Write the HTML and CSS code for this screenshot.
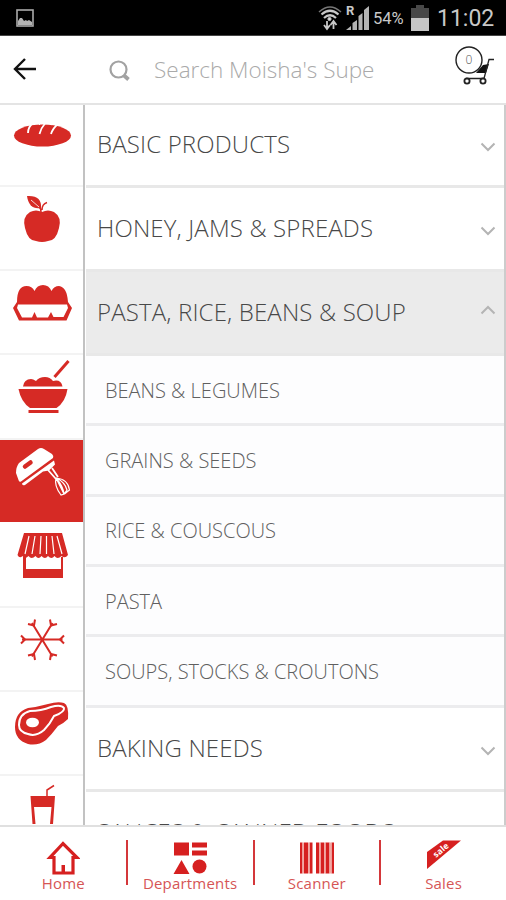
FILE: index.html
```html
<!DOCTYPE html>
<html lang="en">
<head>
<meta charset="utf-8">
<title>Departments</title>
<link rel="stylesheet" href="styles.css">
</head>
<body>
<div class="app">
  <div class="status">
    <svg class="st-pic" width="18" height="18" viewBox="0 0 18 18"><rect x="1" y="1" width="16" height="16" fill="none" stroke="#aaa" stroke-width="1.6"/><path d="M2 16v-4l2-3 2 0 2 3 2-1 1 1 2-1 3 2v3z" fill="#b4b4b4"/></svg>
    <svg class="st-wifi" width="24" height="26" viewBox="0 0 24 26" fill="none" stroke="#c8c8c8"><path d="M1 7Q12-3 23 7" stroke="#777" stroke-width="1.5"/><path d="M3.500 9.500Q12 2 20.500 9.500M6 13Q12 7.500 18 13" stroke-width="2.200"/><circle cx="11.500" cy="14" r="1.600" fill="#ddd"/><path d="M9 16v7M6 20l3 4 3-4M15.500 24v-7M12.500 20l3-4 3 4" stroke-width="1.800"/></svg>
    <div class="signal"><span class="roam">R</span><svg width="24" height="26" viewBox="0 0 24 26" fill="#b4b4b4"><path d="M0 25l5-4v4zM6.500 18l4.500-3v10H6.500zM12.500 11l4-3v17h-4zM18 5l5-4v24h-5z"/></svg></div>
    <span class="pct">54%</span>
    <svg class="st-bat" width="18" height="26" viewBox="0 0 18 26"><path d="M5 0h8v3h5v11H0V3h5z" fill="#484848"/><path d="M0 13h18v13H0z" fill="#c5c5c5"/></svg>
    <span class="clock">11:02</span>
  </div>
  <header class="header">
    <svg class="back" width="24" height="24" viewBox="0 0 24 24" fill="none" stroke="#111" stroke-width="2.400"><path d="M12 2L2 12l10 10M2 12h21"/></svg>
    <svg class="mag" width="22" height="22" viewBox="0 0 22 22" fill="none" stroke="#a2a2a2"><circle cx="9.500" cy="9.500" r="8" stroke-width="2.200"/><path d="M14.500 15l5 4.500" stroke-width="3.800"/></svg>
    <span class="ph">Search Moisha's Supe</span>
    <svg class="cart" width="40" height="40" viewBox="0 0 40 40"><path d="M21 27l7-8 6-1-3 9z" fill="#111"/><g fill="none" stroke="#222"><path d="M39 13.500h-5l-5 19H11" stroke-width="1.300"/><circle cx="14" cy="14" r="13" fill="#fff" stroke-width="1.400"/><circle cx="12" cy="35" r="2.600" stroke-width="1.800"/><circle cx="28" cy="35" r="2.600" stroke-width="1.800"/></g><text class="count" x="14" y="18" text-anchor="middle">0</text></svg>
  </header>
  <main class="main">
    <nav class="side">
      <div class="cell"><svg viewBox="0 0 84 84" width="84" height="84" fill="#d62a25"><ellipse cx="42.500" cy="31.500" rx="28.500" ry="11"/><path d="M28 29Q28 23 33 19M39.500 30Q41 24 45 19.500M51 30Q53 24 58 20" fill="none" stroke="#fff" stroke-width="1.800"/><path d="M27 22l5-5M39 21l4-4M51 21l5-4" stroke="#fff" stroke-width="1"/></svg></div>
      <div class="cell"><svg viewBox="0 0 84 84" width="84" height="84" fill="#d62a25"><path d="M42 25Q48 22 54 25Q62 30 59 41Q56 54 48 54Q42 56 36 54Q28 54 25 41Q22 30 30 25Q36 22 42 25z"/><path d="M27 9Q42 8 41 21Q29 23 27 9z"/><path d="M39 20Q41 21 41 25M42 23Q42 17 47 15.500" fill="none" stroke="#d62a25" stroke-width="1.500"/><path d="M31 13L39 20" stroke="#fff" stroke-width=".8"/></svg></div>
      <div class="cell"><svg viewBox="0 0 84 84" width="84" height="84"><path d="M17 31Q17 15 26.500 15Q32 15 34.500 20Q37 14 43 14Q49 14 51.500 20Q54 15 59 15Q67 16 68 31L72 37L66.500 49.500H19L13 37z" fill="#d62a25"/><path d="M18 33.500H67L68 37L63.500 46H53.500L51 41L48 46.500H37L34.500 41L32 46.500H22L17 37z" fill="#fff"/></svg></div>
      <div class="cell"><svg viewBox="0 0 84 84" width="84" height="84" fill="#d62a25"><path d="M23 31.500Q24 24 31 24Q33 24 36 26Q39 22 45 22Q50 22 53 26Q61 24 62.500 31.500z"/><path d="M18.500 34h49q-2 13-11 19H30q-9-6-11.500-19z"/><path d="M28.500 55h30v3h-30z"/><path d="M54.500 22L68.500 6" stroke="#d62a25" stroke-width="3"/></svg></div>
      <div class="cell active"><svg viewBox="0 0 84 84" width="84" height="84" fill="#fff"><path d="M19 23L38 9q3-2 6 0l8 5q2 2 1 4L21 41.500q-2 1-2.500-1.500L16 33q0-6 3-10z"/><path d="M22 43.500L54 20.500l1 4-6 6-6 1-18 13.500q-3 1-3-1.500z"/><path d="M25 26.500l5.500-4" stroke="#d62a25" stroke-width="4.500" stroke-linecap="round"/><path d="M48 30l8 9M52 28l6 9" stroke="#fff" stroke-width="1.800"/><path d="M56 38q-2 8 5 17l3-1q-1-8-8-16q9 4 11 12l-3 4M56 38l8 16M56 38q12 1 13.500 12l-5 4" fill="none" stroke="#fff" stroke-width="1.200"/></svg></div>
      <div class="cell"><svg viewBox="0 0 84 84" width="84" height="84" fill="#d62a25"><path d="M24 9h38l6 22q-3 4-6.500 1q-4 4-7 0q-3 4-6.500 0q-3 4-6.500 0q-3 4-6 0q-4 4-7 0q-4 4-6 0q-3 3-5-1z"/><path d="M29 12l-4 18M35 12l-3 18M41 12l-1 18M46.500 12v18M52 12l2 18M57 12l5 18" stroke="#fff" stroke-width="1.200"/><path d="M23 33h3v12h35V33h2v21H23z"/></svg></div>
      <div class="cell"><svg viewBox="0 0 84 84" width="84" height="84" fill="none" stroke="#d62a25" stroke-width="2"><path d="M22 31.500H62.500M32 15L52.500 48.500M52.500 15L32 48.500"/><path d="M64 27.500l-4 4 4 4M21 27.500l4 4-4 4M28 16l6 1.500 1-6M57 16l-6 1.500-1-6M28 47.500l6-1.500 1 6M57 47.500l-6-1.500-1 6"/></svg></div>
      <div class="cell"><svg viewBox="0 0 84 84" width="84" height="84" fill="#d62a25"><path d="M15 35Q15 20 28 16Q37 15 48 12Q58 9 64 11Q69 13 68 27Q64 31 58 34Q52 42 46 48Q38 54 28 52Q15 48 15 35z"/><path d="M19 33Q19 22 30 19Q41 19 51 15Q61 12 64 16Q65 20 54 24Q50 32 44 38Q36 45 28 42Q19 40 19 33z" fill="none" stroke="#fff" stroke-width="2"/><ellipse cx="32.500" cy="30.500" rx="6.500" ry="4.800" fill="#fff"/></svg></div>
      <div class="cell"><svg viewBox="0 0 84 84" width="84" height="84" fill="#d62a25"><path d="M30.500 20h24.500l-2 28h-3l1.500-17H34l1.500 17h-3z"/><path d="M47 20v-6l7-4.500" fill="none" stroke="#d62a25" stroke-width="1.500"/></svg></div>
    </nav>
    <div class="list">
      <div class="row"><span>BASIC PRODUCTS</span><svg class="chev" width="16" height="10" viewBox="0 0 16 10"><path d="M1.500 1.500L8 8l6.500-6.500"/></svg></div>
      <div class="row"><span>HONEY, JAMS &amp; SPREADS</span><svg class="chev" width="16" height="10" viewBox="0 0 16 10"><path d="M1.500 1.500L8 8l6.500-6.500"/></svg></div>
      <div class="row open"><span>PASTA, RICE, BEANS &amp; SOUP</span><svg class="chev up" width="16" height="10" viewBox="0 0 16 10"><path d="M1.500 8.500L8 2l6.500 6.500"/></svg></div>
      <div class="sub"><span>BEANS &amp; LEGUMES</span></div>
      <div class="sub"><span>GRAINS &amp; SEEDS</span></div>
      <div class="sub"><span>RICE &amp; COUSCOUS</span></div>
      <div class="sub"><span>PASTA</span></div>
      <div class="sub"><span>SOUPS, STOCKS &amp; CROUTONS</span></div>
      <div class="row"><span>BAKING NEEDS</span><svg class="chev" width="16" height="10" viewBox="0 0 16 10"><path d="M1.500 1.500L8 8l6.500-6.500"/></svg></div>
      <div class="row"><span>SAUCES &amp; CANNED FOODS</span></div>
    </div>
  </main>
  <footer class="footer">
    <div class="tab"><svg width="34" height="36" viewBox="0 0 34 36"><path d="M17 3.500L4 17.500h4V33h19V17.500h4z" fill="none" stroke="#d62020" stroke-width="3.200"/><path d="M15.500 25h3.500v8h-3.500z" fill="#d62020"/></svg><span>Home</span></div>
    <i class="bar"></i>
    <div class="tab"><svg width="34" height="36" viewBox="0 0 34 36" fill="#d62020"><path d="M1 2.500h15v13H1zM19 2.500h15v5H19zM19 10.500h15v5H19zM8.500 20l8 14H.5z"/><circle cx="26.500" cy="26.500" r="7"/></svg><span>Departments</span></div>
    <i class="bar"></i>
    <div class="tab"><svg width="34" height="36" viewBox="0 0 34 36" fill="#d62020"><path d="M0 2.500h2.500v31H0zM4 2.500h4v31H4zM9.500 2.500h3v31h-3zM16 2.500h3v31h-3zM20.500 2.500h3.500v31h-3.500zM25.500 2.500h4v31h-4zM31.500 2.500h2.500v31h-2.500z"/><path d="M2.500 2.500h1.500v31H2.500zM8 2.500h1.500v31H8zM19 2.500h1.500v31H19zM24 2.500h1.500v31H24zM29.500 2.500h2v31h-2z" fill="#f2a9a4"/></svg><span>Scanner</span></div>
    <i class="bar"></i>
    <div class="tab"><svg width="34" height="36" viewBox="0 0 34 36"><path d="M0 12L16 0.500h18L0 29z" fill="#d62020"/><text class="sale" transform="translate(9 18) rotate(-40)">sale</text></svg><span>Sales</span></div>
  </footer>
</div>
</body>
</html>
```
FILE: styles.css
```css
* { box-sizing: border-box; }
body { margin: 0; background: #fff; font-family: "Open Sans", sans-serif; }
.app { width: 506px; height: 900px; display: flex; flex-direction: column; overflow: hidden; }
svg { display: block; flex: none; }
span { white-space: nowrap; }

.status { height: 36px; flex: none; background: #000; display: flex; align-items: center; color: #c8c8c8; font-family: Roboto, sans-serif; border-bottom: 1px solid #444; }
.st-pic { margin-left: 16px; }
.st-wifi { margin-left: 284px; margin-top: 1px; }
.signal { display: flex; align-items: center; margin-left: 4px; width: 24px; }
.signal svg { margin-left: -12px; }
.roam { width: 12px; font-size: 13px; font-weight: 700; line-height: 12px; margin-top: -13px; }
.pct { margin-left: 3px; margin-top: 2px; font-size: 16.5px; width: 36px; }
.st-bat { margin-left: 2px; }
.clock { margin-left: 8px; margin-top: 2px; font-size: 23px; }

.header { height: 69px; flex: none; display: flex; align-items: center; border-bottom: 2px solid #e4e4e4; }
.back { margin-left: 13px; margin-top: -1px; }
.mag { margin-left: 72px; margin-top: 2px; }
.ph { margin-left: 23px; width: 301px; font-size: 22.500px; font-weight: 300; color: #aaa; }
.cart { margin-top: -7px; }

.main { height: 720px; flex: none; display: flex; overflow: hidden; }
.side { width: 85px; flex: none; border-right: 2px solid #c2c2c2; }
.cell { height: 84.2px; border-bottom: 2px solid #f3f3f3; overflow: hidden; }
.cell:first-child { height: 82px; }
.cell:first-child svg { margin-top: -1px; }
.active { border-bottom-color: #fff; background: #d62a25 padding-box; }

.list { flex: 1; margin-left: 1px; border-right: 2px solid #ccc; }
.row { height: 84.3px; border-bottom: 3px solid #e8e8e8; display: flex; align-items: center; justify-content: space-between; padding: 0 8px 2px 11px; font-size: 24px; letter-spacing: .15px; font-weight: 300; color: #484848; }
.row:first-child { height: 82.6px; }
.row:last-child { padding-bottom: 3px; }
.open { background: #ebebeb; }
.sub { height: 70.3px; border-bottom: 3px solid #ececee; background: #fdfdfe; display: flex; align-items: center; padding: 1px 0 0 19px; font-size: 20px; font-weight: 300; color: #606060; }
.chev { margin-top: 7px; fill: none; stroke: #b4b4b4; stroke-width: 2; }
.up { margin-top: -3px; }

.footer { flex: 1; border-top: 2px solid #e0e0e0; display: flex; padding-left: 1px; }
.tab { flex: 1; min-width: 0; display: flex; flex-direction: column; align-items: center; padding-top: 13px; color: #d65555; font-size: 15px; letter-spacing: .2px; line-height: 15px; }
.bar { width: 2px; height: 45px; margin-top: 13px; background: #d4373a; }
.sale { font: 700 8.500px "Open Sans", sans-serif; fill: #fff; }
.count { font: 300 12px "Open Sans", sans-serif; fill: #555; }
```
